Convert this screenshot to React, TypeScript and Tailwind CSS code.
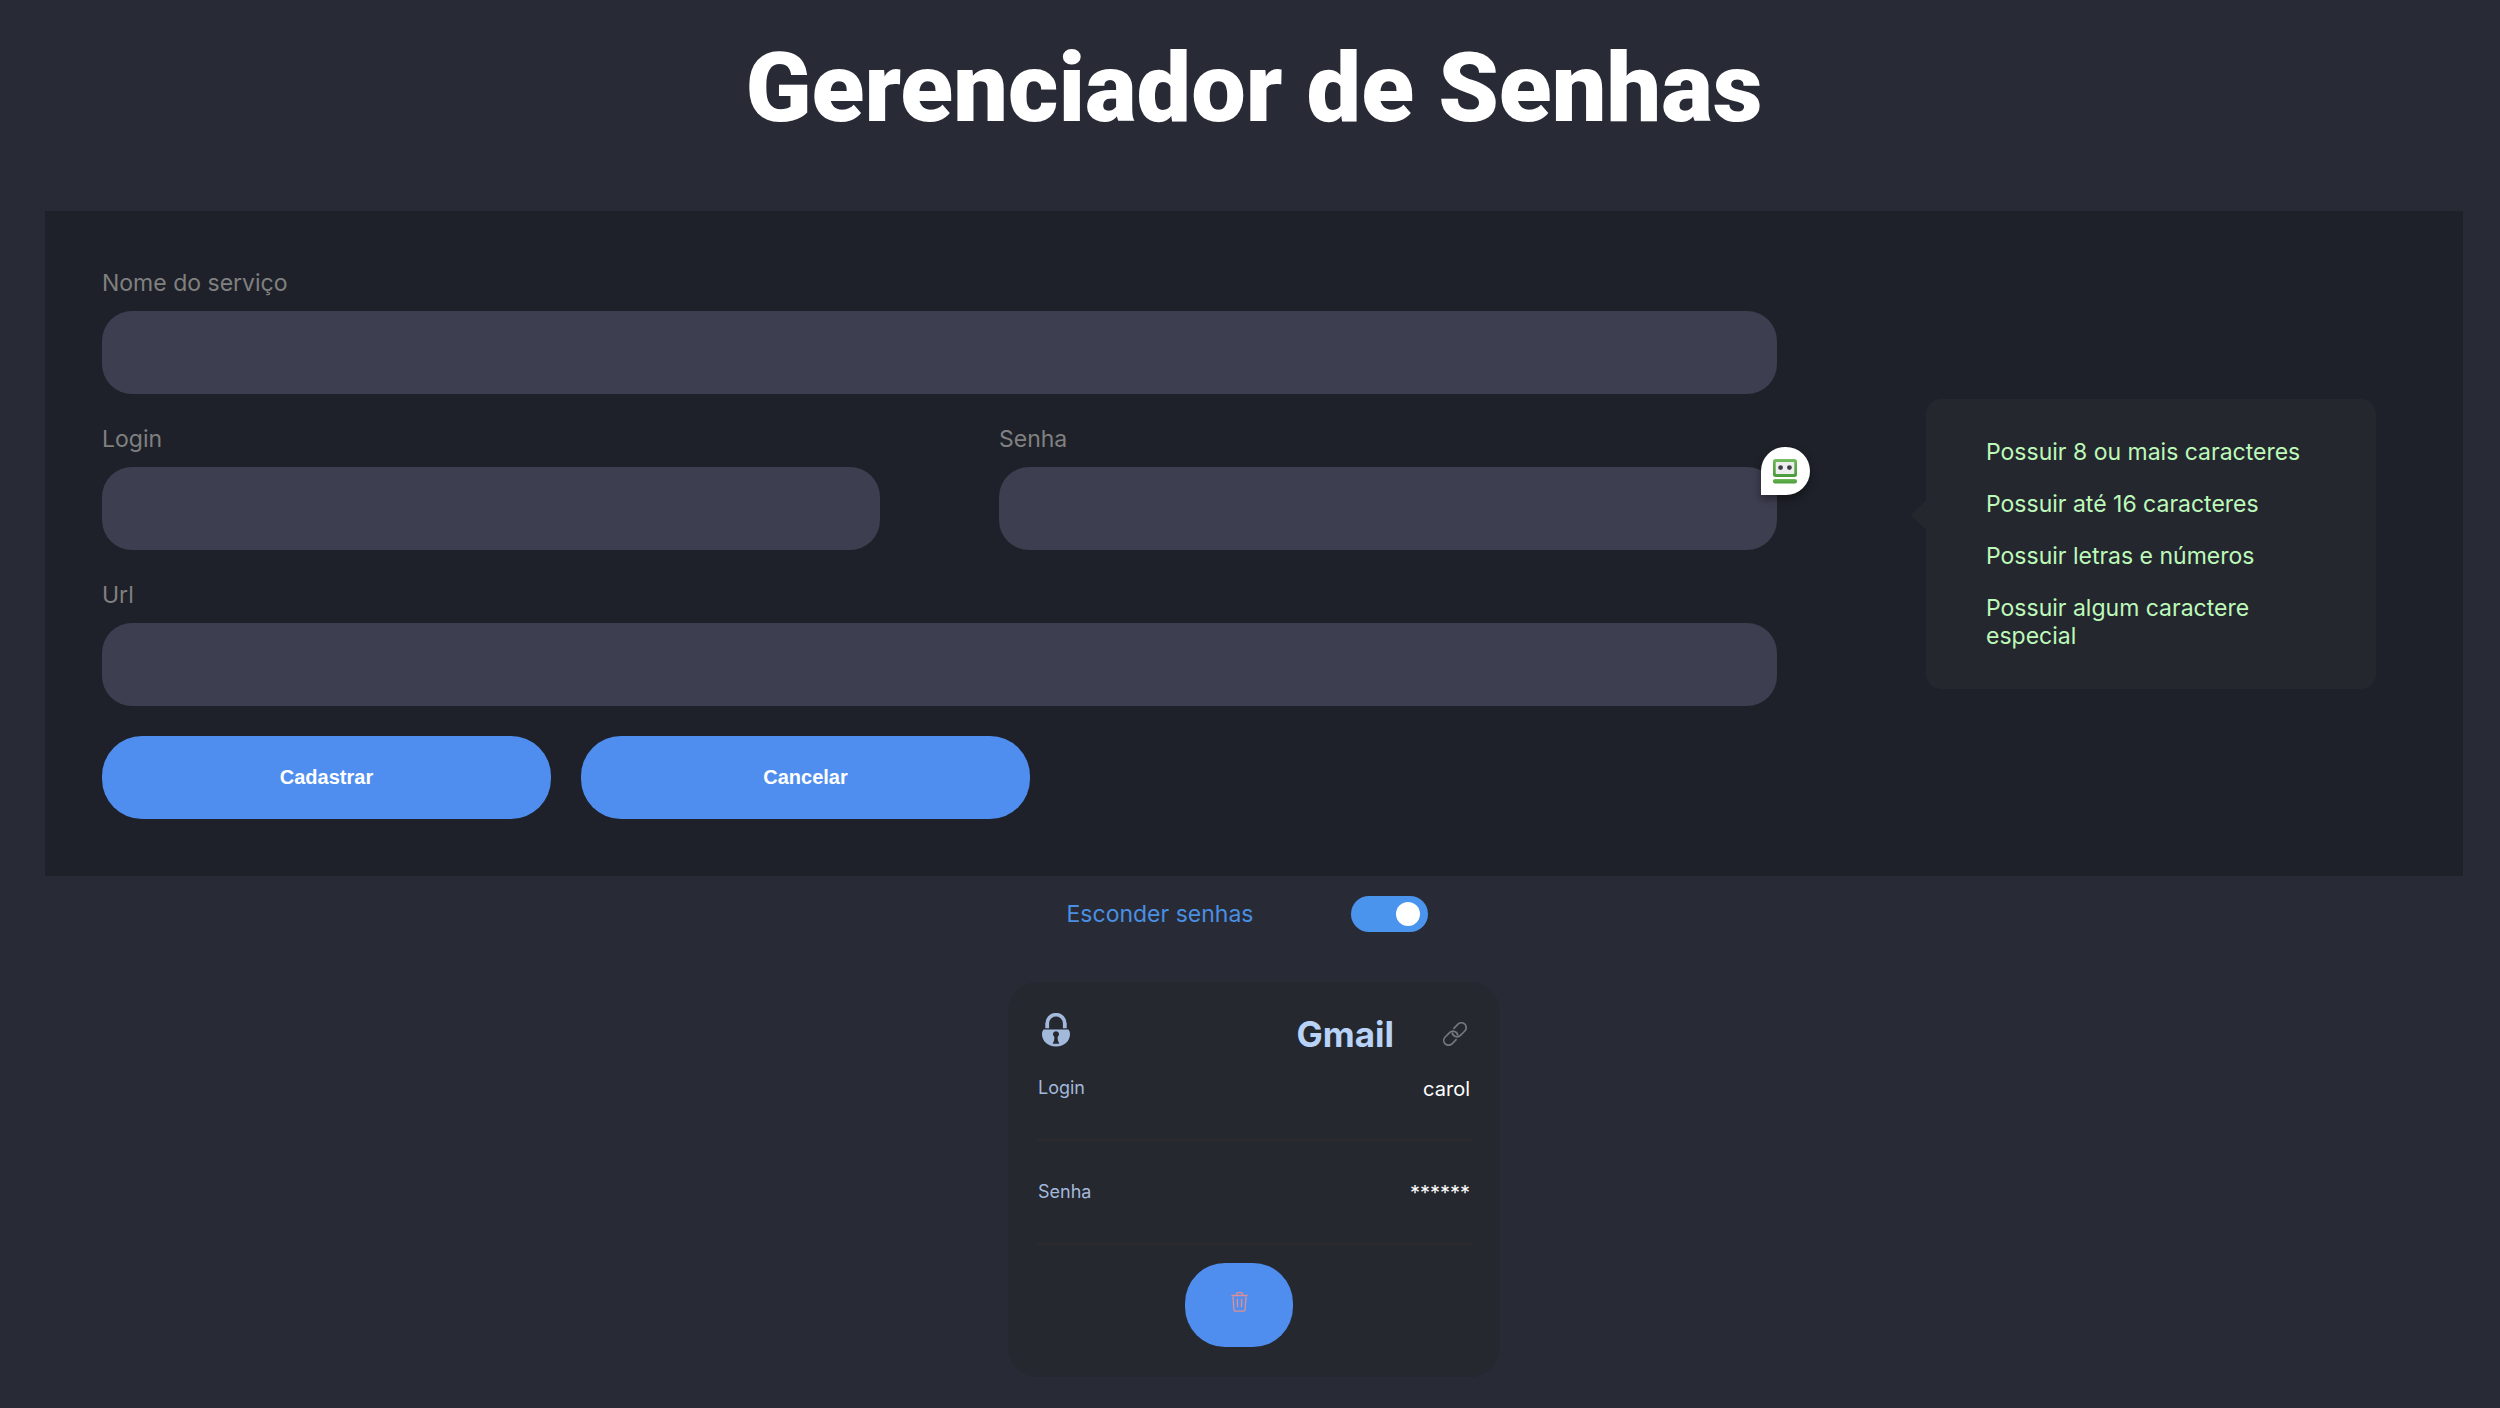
import { useState } from 'react';

const rules = [
  'Possuir 8 ou mais caracteres',
  'Possuir até 16 caracteres',
  'Possuir letras e números',
  'Possuir algum caractere especial',
];

const inputClass =
  'block h-[83px] w-full rounded-[30px] bg-[#3d3e4f] px-6 text-2xl text-white outline-none';
const labelClass = 'mb-[13px] block text-[23px] leading-[30px] text-[#808080]';
const buttonClass =
  'h-[83px] w-[449px] rounded-[40px] bg-[#4f8eee] pb-0.5 font-["Liberation_Sans",sans-serif] text-[20px] font-bold text-white';

function RobotBadge() {
  return (
    <button
      type="button"
      aria-label="Preencher senha"
      className="absolute -top-5 -right-[33px] h-12 w-[49px] rounded-full rounded-bl-none bg-white shadow-[0_4px_8px_rgba(0,0,0,0.4)]"
    >
      <svg viewBox="0 0 49 48" className="size-full">
        <defs>
          <linearGradient id="robot" x1="0" y1="0" x2="0" y2="1">
            <stop offset="0" stopColor="#7cbf66" />
            <stop offset="0.25" stopColor="#5fb04c" />
            <stop offset="1" stopColor="#4b9c3b" />
          </linearGradient>
        </defs>
        <rect x="12" y="12" width="24" height="18" rx="2.5" fill="url(#robot)" />
        <rect x="14.7" y="15" width="18.6" height="12" rx="1" fill="#eeeeef" />
        <circle cx="19.6" cy="20.6" r="2.4" fill="#3d3e4a" />
        <circle cx="28.4" cy="20.6" r="2.4" fill="#3d3e4a" />
        <rect x="12" y="32" width="24" height="4.4" rx="2" fill="url(#robot)" />
      </svg>
    </button>
  );
}

function LockIcon() {
  return (
    <svg viewBox="0 0 28 34" className="mt-px ml-1 h-[34px] w-[28px] text-[#a3b9dc]" aria-hidden="true">
      <path d="M5.2 15.2V10.5a8.8 8.8 0 0 1 17.6 0v4.7" fill="none" stroke="currentColor" strokeWidth="3.8" />
      <path
        fillRule="evenodd"
        fill="currentColor"
        d="M1.6 16.6h24.8c1 1.3 1.6 2.8 1.6 4.5C28 27.8 22.6 33.6 14 33.6S0 27.8 0 21.1c0-1.7.6-3.2 1.6-4.5ZM14 18.2a3 3 0 0 0-1.7 5.5c.3 2.5-.5 4.8-1.6 7.1h6.6c-1.1-2.3-1.9-4.6-1.6-7.1A3 3 0 0 0 14 18.2Z"
      />
    </svg>
  );
}

function LinkIcon() {
  return (
    <svg viewBox="0 0 24 24" className="size-6" fill="none" stroke="currentColor" strokeWidth="1.7" aria-hidden="true">
      <path d="M10.4 6.8L15 2.2A4.8 4.8 0 0 1 21.8 9L17.4 13.4A4.8 4.8 0 0 1 9.2 10.4" />
      <path d="M13.6 17.2L9 21.8A4.8 4.8 0 0 1 2.200 15L6.600 10.600A4.800 4.800 0 0 1 14.800 13.600" />
    </svg>
  );
}

function TrashIcon() {
  return (
    <svg viewBox="0 0 17 20" className="h-5 w-[17px]" fill="none" stroke="currentColor" strokeWidth="1.3" aria-hidden="true">
      <path d="M.4 3.5h16.2M5.7 3.2V1.6c0-.6.3-.9.9-.9h3.8c.6 0 .9.3.9.9v1.6" />
      <path d="M2 4.6l.9 13.1c0 .9.5 1.4 1.3 1.4h8.6c.8 0 1.3-.5 1.3-1.4L15 4.6" />
      <path d="M6.3 6.7l.3 8.6M10.7 6.7l-.3 8.6" />
    </svg>
  );
}

export default function App() {
  const [hidden, setHidden] = useState(true);

  return (
    <main className="min-h-screen bg-[#282a36] pr-[37px] pb-[30px] pl-[45px] font-[Inter,sans-serif]">
      <h1 className="pt-8 pb-[67px] text-center font-[Roboto,sans-serif] text-[97px] leading-[112px] font-black text-white">
        Gerenciador de Senhas
      </h1>

      <form className="flex items-center gap-[149px] bg-[#1e2129] p-[57px]" onSubmit={(e) => e.preventDefault()}>
        <div className="flex flex-1 flex-col gap-[30px]">
          <div>
            <label htmlFor="servico" className={labelClass}>Nome do serviço</label>
            <input id="servico" type="text" className={inputClass} />
          </div>
          <div className="grid grid-cols-2 gap-[119px]">
            <div>
              <label htmlFor="login" className={labelClass}>Login</label>
              <input id="login" type="text" className={inputClass} />
            </div>
            <div>
              <label htmlFor="senha" className={labelClass}>Senha</label>
              <div className="relative">
                <input id="senha" type="password" className={inputClass} />
                <RobotBadge />
              </div>
            </div>
          </div>
          <div>
            <label htmlFor="url" className={labelClass}>Url</label>
            <input id="url" type="text" className={inputClass} />
          </div>
          <div className="flex gap-[30px]">
            <button type="submit" className={buttonClass}>Cadastrar</button>
            <button type="button" className={buttonClass}>Cancelar</button>
          </div>
        </div>

        <div className="relative mr-[30px] w-[450px] rounded-[15px] bg-[#25272f] px-[60px] py-[39px]">
          <span className="absolute top-[40%] right-full -mt-[15px] border-y-[15px] border-r-[15px] border-y-transparent border-r-[#25272f]" />
          <ul className="flex flex-col gap-6 text-[23px] leading-[28px] text-[#bdf9b9]">
            {rules.map((rule) => (
              <li key={rule}>{rule}</li>
            ))}
          </ul>
        </div>
      </form>

      <div className="mt-5 flex items-center justify-center gap-[98px] pr-[13px]">
        <label htmlFor="esconder" className="text-[23px] leading-[28px] text-[#4a90e2]">Esconder senhas</label>
        <input
          id="esconder"
          type="checkbox"
          role="switch"
          checked={hidden}
          onChange={(e) => setHidden(e.target.checked)}
          className="flex h-9 w-[77px] appearance-none items-center rounded-full bg-[#6b7280] px-2 before:size-6 before:rounded-full before:bg-white checked:justify-end checked:bg-[#4a94ed]"
        />
      </div>

      <section className="mx-auto mt-[50px] w-[492px] rounded-[30px] bg-[#25282f] py-[30px] pr-[28px] pl-[30px]">
        <header className="flex items-start">
          <LockIcon />
          <h2 className="ml-auto text-[35px] leading-[44px] font-bold text-[#b9d3f8]">Gmail</h2>
          <a href="#gmail" aria-label="Abrir Gmail" className="mt-2.5 mr-[5px] ml-[49px] text-[#74777d]">
            <LinkIcon />
          </a>
        </header>
        <dl>
          <div className="mt-[18px] flex justify-between border-b-2 border-[#2c2c2e] pr-0.5 pb-[35px]">
            <dt className="text-[18px] leading-[28px] text-[#a3b9dc]">Login</dt>
            <dd className="text-[20px] leading-[30px] text-white">carol</dd>
          </div>
          <div className="flex justify-between border-b-2 border-[#2c2c2e] pt-[37px] pr-0.5 pb-[35px]">
            <dt className="text-[18px] leading-[28px] text-[#a3b9dc]">Senha</dt>
            <dd className="text-[20px] leading-[30px] text-white">{hidden ? '******' : 'segredo'}</dd>
          </div>
        </dl>
        <div className="mt-[18px] flex justify-center pr-8">
          <button
            type="button"
            aria-label="Remover"
            className="flex h-[84px] w-[108px] items-center justify-center rounded-[40px] bg-[#4f8eee] pb-1.5 text-[#e08f92]"
          >
            <TrashIcon />
          </button>
        </div>
      </section>
    </main>
  );
}
